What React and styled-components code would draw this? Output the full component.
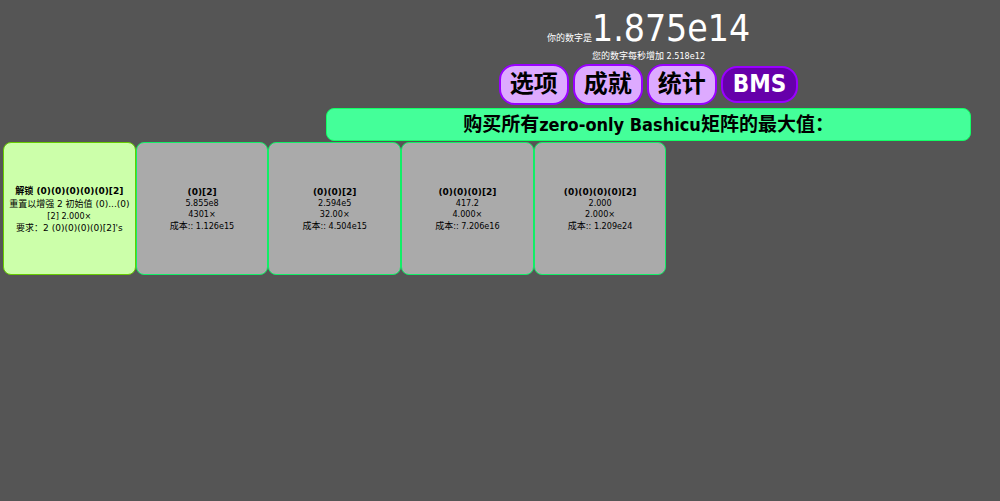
import React from 'react';
import styled, { createGlobalStyle } from 'styled-components';

const GlobalStyle = createGlobalStyle`
  * { box-sizing: border-box; }
  body {
    margin: 0;
    background: #555;
    color: #fff;
    font-family: "DejaVu Sans Condensed", "Noto Sans CJK SC", sans-serif;
    font-size: 9px;
  }
  button { font-family: inherit; color: #000; cursor: pointer; }
`;

const Page = styled.div`
  padding: 3px;
`;

const Main = styled.main`
  display: flex;
  flex-direction: column;
  align-items: center;
  padding: 3px 26px 0 32.5%;
`;

const Score = styled.p`
  margin: 0;
  height: 42px;
  line-height: 46px;
  white-space: nowrap;
`;

const Value = styled.span`
  font-size: 37px;
`;

const Rate = styled.p`
  margin: 0;
  height: 16px;
  line-height: 16px;
`;

const Nav = styled.nav`
  display: flex;
  align-items: center;
  gap: 4px;
`;

const NavButton = styled.button`
  height: ${(p) => (p.$active ? 37 : 41)}px;
  padding: 0 ${(p) => (p.$active ? 10 : 9)}px 2px;
  border: 2px solid #90f;
  border-radius: 16px;
  background: ${(p) => (p.$active ? '#60a' : '#daf')};
  color: ${(p) => (p.$active ? '#fff' : '#000')};
  font-size: 24px;
  line-height: 32px;
  font-weight: bold;
`;

const BuyMax = styled.button`
  width: 100%;
  height: 33px;
  margin-top: 3px;
  padding: 0;
  border: 1px solid #1f6;
  border-radius: 8px;
  background: #4f9;
  font-size: 19px;
  line-height: 28px;
  font-weight: bold;
`;

const MatrixKind = styled.span`
  font-size: 18px;
`;

const Cards = styled.section`
  display: flex;
  flex-wrap: wrap;
  margin-top: 1px;
`;

const Card = styled.button`
  display: flex;
  flex-direction: column;
  align-items: center;
  justify-content: center;
  flex: 0 0 13.35%;
  min-width: 132px;
  height: 133px;
  padding: 2px 4px 0;
  border: 1px solid ${(p) => (p.$unlock ? '#6c0' : '#1e6')};
  border-radius: 8px;
  background: ${(p) => (p.$unlock ? '#cfa' : '#aaa')};
  font-size: 9px;
`;

const Line = styled.span`
  line-height: ${(p) => (p.$tall ? 13 : 11)}px;
  white-space: nowrap;
`;

const WideLine = styled(Line)`
  font-family: "DejaVu Sans", "Noto Sans CJK SC", sans-serif;
`;

const Title = styled(WideLine)`
  font-weight: bold;
`;

const tabs = ['选项', '成就', '统计'];

const matrices = [
  { name: '(0)[2]', amount: '5.855e8', multiplier: '4301×', cost: '1.126e15' },
  { name: '(0)(0)[2]', amount: '2.594e5', multiplier: '32.00×', cost: '4.504e15' },
  { name: '(0)(0)(0)[2]', amount: '417.2', multiplier: '4.000×', cost: '7.206e16' },
  { name: '(0)(0)(0)(0)[2]', amount: '2.000', multiplier: '2.000×', cost: '1.209e24' },
];

export default function App() {
  return (
    <Page>
      <GlobalStyle />
      <Main>
        <Score>你的数字是<Value>1.875e14</Value></Score>
        <Rate>您的数字每秒增加 2.518e12</Rate>
        <Nav>
          {tabs.map((tab) => <NavButton key={tab}>{tab}</NavButton>)}
          <NavButton $active>BMS</NavButton>
        </Nav>
        <BuyMax>购买所有<MatrixKind>zero-only Bashicu</MatrixKind>矩阵的最大值：</BuyMax>
      </Main>
      <Cards>
        <Card $unlock>
          <Title $tall>解锁 (0)(0)(0)(0)(0)[2]</Title>
          <WideLine $tall>重置以增强 2 初始值 (0)...(0)</WideLine>
          <Line>[2] 2.000×</Line>
          <WideLine $tall>要求：2 (0)(0)(0)(0)[2]'s</WideLine>
        </Card>
        {matrices.map((m) => (
          <Card key={m.name}>
            <Title>{m.name}</Title>
            <Line>{m.amount}</Line>
            <Line>{m.multiplier}</Line>
            <Line $tall>成本:: {m.cost}</Line>
          </Card>
        ))}
      </Cards>
    </Page>
  );
}
